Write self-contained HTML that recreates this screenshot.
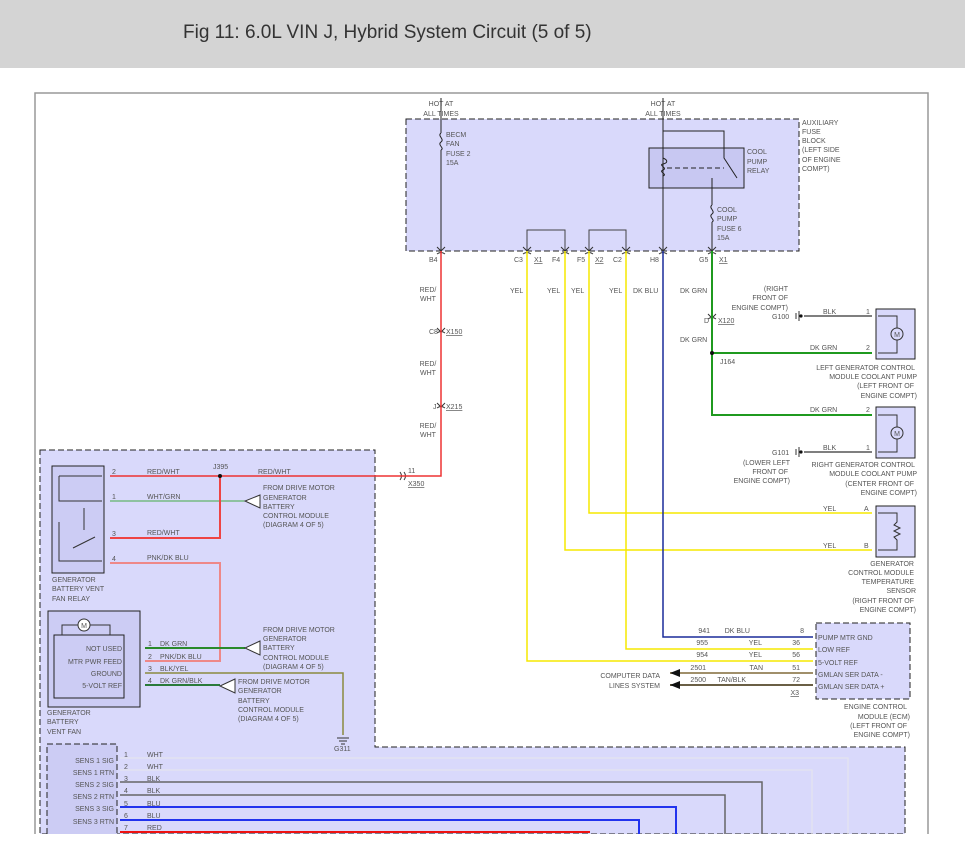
<!DOCTYPE html>
<html><head><meta charset="utf-8"><style>
body{margin:0;background:#fff;width:965px;height:854px;overflow:hidden;font-family:"Liberation Sans",sans-serif}
#hd{position:absolute;left:0;top:0;width:965px;height:68px;background:#d4d4d4}
#hd span{position:absolute;left:183px;top:22px;font-size:19px;color:#333}
svg{position:absolute;left:0;top:0}
text{font-family:"Liberation Sans",sans-serif;font-size:7px;fill:#555}
.r{text-anchor:end}.m{text-anchor:middle}
</style></head><body>
<div id="hd"><span>Fig 11: 6.0L VIN J, Hybrid System Circuit (5 of 5)</span></div>
<svg width="965" height="854" viewBox="0 0 965 854">
<rect x="35" y="93" width="893" height="760" fill="#fff" stroke="#999" stroke-width="1.5"/>
<rect x="0" y="834" width="965" height="20" fill="#fff"/>
<rect x="406" y="119" width="393" height="132" fill="#d9d9fb" stroke="#222" stroke-dasharray="6,3"/>
<path d="M40 450H375V747H905V834H40Z" fill="#d9d9fb" stroke="#222" stroke-dasharray="6,3"/>
<rect x="0" y="834" width="965" height="20" fill="#fff"/>
<rect x="816" y="623" width="94" height="76" fill="#d9d9fb" stroke="#222" stroke-dasharray="6,3"/>
<rect x="876" y="309" width="39" height="50" fill="#d9d9fb" stroke="#222"/>
<rect x="876" y="407" width="39" height="51" fill="#d9d9fb" stroke="#222"/>
<rect x="876" y="506" width="39" height="51" fill="#d9d9fb" stroke="#222"/>
<text class="m" x="441" y="106">HOT AT</text><text class="m" x="441" y="116">ALL TIMES</text>
<text class="m" x="663" y="106">HOT AT</text><text class="m" x="663" y="116">ALL TIMES</text>
<path d="M441 98V133M441 150V251" stroke="#222" fill="none"/>
<path d="M441 133c-4 3 4 6 0 9s4 6 0 8" stroke="#222" fill="none"/>
<text x="446" y="137">BECM</text><text x="446" y="146">FAN</text><text x="446" y="156">FUSE 2</text><text x="446" y="165">15A</text>
<text x="802" y="125">AUXILIARY</text><text x="802" y="134">FUSE</text><text x="802" y="143">BLOCK</text><text x="802" y="152">(LEFT SIDE</text><text x="802" y="162">OF ENGINE</text><text x="802" y="171">COMPT)</text>
<rect x="649" y="148" width="95" height="40" fill="#c8c8f2" stroke="#222"/>
<path d="M663 98V251M663 131H724V158L737 178M712 178V205M712 222V251" stroke="#222" fill="none"/>
<path d="M663 158c5 2 5 5 0 6s5 4 0 6s5 4 0 6" stroke="#222" fill="none"/>
<path d="M667 168H724" stroke="#222" stroke-dasharray="5,3"/>
<path d="M712 205c-4 3 4 6 0 9s4 6 0 8" stroke="#222" fill="none"/>
<text x="747" y="154">COOL</text><text x="747" y="164">PUMP</text><text x="747" y="173">RELAY</text>
<text x="717" y="212">COOL</text><text x="717" y="221">PUMP</text><text x="717" y="231">FUSE 6</text><text x="717" y="240">15A</text>
<path d="M527 251V230H565V251M589 251V230H626V251" stroke="#444" fill="none"/>
<g fill="none" stroke="#333"><path d="M437 247l4 4 4-4M523 247l4 4 4-4M561 247l4 4 4-4M585 247l4 4 4-4M622 247l4 4 4-4M659 247l4 4 4-4M708 247l4 4 4-4"/>
<path d="M437 254q4 -3 8 0M523 254q4 -3 8 0M561 254q4 -3 8 0M585 254q4 -3 8 0M622 254q4 -3 8 0M659 254q4 -3 8 0M708 254q4 -3 8 0"/>
<path d="M437 328l4 4 4-4M437 333q4 -3 8 0M437 403l4 4 4-4M437 408q4 -3 8 0M708 314l4 4 4-4M708 319q4 -3 8 0"/>
<path d="M400 472q3 4 0 8M404 472q3 4 0 8"/></g>
<g font-size="7"><text x="429" y="262">B4</text><text x="514" y="262">C3</text><text x="534" y="262" text-decoration="underline">X1</text><text x="552" y="262">F4</text><text x="577" y="262">F5</text><text x="595" y="262" text-decoration="underline">X2</text><text x="613" y="262">C2</text><text x="650" y="262">H8</text><text x="699" y="262">G5</text><text x="719" y="262" text-decoration="underline">X1</text></g>
<path d="M441 251V476H380" stroke="#e33" stroke-width="1.5" fill="none"/>
<text class="m" x="428" y="292">RED/</text><text class="m" x="428" y="301">WHT</text>
<text class="m" x="428" y="366">RED/</text><text class="m" x="428" y="375">WHT</text>
<text class="m" x="428" y="428">RED/</text><text class="m" x="428" y="437">WHT</text>
<text x="429" y="334">C8</text><text x="446" y="334" text-decoration="underline">X150</text>
<text x="433" y="409">J</text><text x="446" y="409" text-decoration="underline">X215</text>
<path d="M527 251V661H813M565 251V550H872M589 251V513H872M626 251V649H813" stroke="#f5e800" stroke-width="1.5" fill="none"/>
<path d="M663 251V637H813" stroke="#1a2c9a" stroke-width="1.5" fill="none"/>
<path d="M712 251V415H872M712 353H872" stroke="#1f9a1f" stroke-width="2" fill="none"/>
<circle cx="712" cy="353" r="2" fill="#111"/>
<text x="510" y="293">YEL</text><text x="547" y="293">YEL</text><text x="571" y="293">YEL</text><text x="609" y="293">YEL</text><text x="633" y="293">DK BLU</text><text x="680" y="293">DK GRN</text>
<text class="r" x="788" y="291">(RIGHT</text><text class="r" x="788" y="300">FRONT OF</text><text class="r" x="788" y="310">ENGINE COMPT)</text>
<text x="704" y="323">D</text><text x="718" y="323" text-decoration="underline">X120</text>
<text x="680" y="342">DK GRN</text><text x="720" y="364">J164</text>
<path d="M804 316H872M804 452H872" stroke="#555" stroke-width="1.5"/>
<path d="M796 313v6M799 311v10" stroke="#333"/><circle cx="801" cy="316" r="1.6" fill="#111"/>
<path d="M796 449v6M799 447v10" stroke="#333"/><circle cx="801" cy="452" r="1.6" fill="#111"/>
<text x="772" y="319">G100</text><text x="772" y="455">G101</text>
<text x="823" y="314">BLK</text><text x="823" y="450">BLK</text>
<text x="810" y="350">DK GRN</text><text x="810" y="412">DK GRN</text>
<text x="866" y="314">1</text><text x="866" y="350">2</text><text x="866" y="412">2</text><text x="866" y="450">1</text>
<circle cx="897" cy="334" r="6" fill="none" stroke="#333"/><text class="m" x="897" y="337">M</text>
<path d="M878 316H897V328M878 353H897V340" stroke="#333" fill="none"/>
<circle cx="897" cy="433" r="6" fill="none" stroke="#333"/><text class="m" x="897" y="436">M</text>
<path d="M878 415H897V427M878 452H897V439" stroke="#333" fill="none"/>
<text class="r" x="915" y="370">LEFT GENERATOR CONTROL</text><text class="r" x="917" y="379">MODULE COOLANT PUMP</text><text class="r" x="914" y="388">(LEFT FRONT OF</text><text class="r" x="917" y="398">ENGINE COMPT)</text>
<text class="r" x="790" y="465">(LOWER LEFT</text><text class="r" x="788" y="474">FRONT OF</text><text class="r" x="790" y="483">ENGINE COMPT)</text>
<text class="r" x="915" y="467">RIGHT GENERATOR CONTROL</text><text class="r" x="917" y="476">MODULE COOLANT PUMP</text><text class="r" x="914" y="486">(CENTER FRONT OF</text><text class="r" x="917" y="495">ENGINE COMPT)</text>
<text x="823" y="511">YEL</text><text x="823" y="548">YEL</text><text x="864" y="511">A</text><text x="864" y="548">B</text>
<path d="M878 513H897V522l-3 3 6 3-6 3 6 3-6 3 3 3V550H878" stroke="#333" fill="none"/>
<text class="r" x="914" y="566">GENERATOR</text><text class="r" x="914" y="575">CONTROL MODULE</text><text class="r" x="914" y="584">TEMPERATURE</text><text class="r" x="916" y="593">SENSOR</text><text class="r" x="914" y="603">(RIGHT FRONT OF</text><text class="r" x="916" y="612">ENGINE COMPT)</text>
<path d="M670 673H813" stroke="#a08f6a" stroke-width="2"/><path d="M670 685H813" stroke="#6a5f45" stroke-width="2"/>
<path d="M670 673l10-4v8zM670 685l10-4v8z" fill="#111"/>
<text class="r" x="660" y="678">COMPUTER DATA</text><text class="r" x="660" y="688">LINES SYSTEM</text>
<g class="r"><text x="710" y="633">941</text><text x="708" y="645">955</text><text x="708" y="657">954</text><text x="706" y="670">2501</text><text x="706" y="682">2500</text>
<text x="750" y="633">DK BLU</text><text x="762" y="645">YEL</text><text x="762" y="657">YEL</text><text x="763" y="670">TAN</text><text x="746" y="682">TAN/BLK</text>
<text x="804" y="633">8</text><text x="800" y="645">36</text><text x="800" y="657">56</text><text x="800" y="670">51</text><text x="800" y="682">72</text><text x="799" y="695" text-decoration="underline">X3</text></g>
<text x="818" y="640">PUMP MTR GND</text><text x="818" y="652">LOW REF</text><text x="818" y="665">5-VOLT REF</text><text x="818" y="677">GMLAN SER DATA -</text><text x="818" y="689">GMLAN SER DATA +</text>
<text class="r" x="907" y="709">ENGINE CONTROL</text><text class="r" x="910" y="719">MODULE (ECM)</text><text class="r" x="907" y="728">(LEFT FRONT OF</text><text class="r" x="910" y="737">ENGINE COMPT)</text>
<rect x="52" y="466" width="52" height="107" fill="#ccccf4" stroke="#222"/>
<path d="M110 476H380" stroke="#e33" stroke-width="1.5"/>
<path d="M110 501H245" stroke="#4a4" stroke-width="1"/>
<path d="M110 538H220V476" stroke="#e44" stroke-width="2" fill="none"/>
<path d="M110 563H220V661H145" stroke="#e88" stroke-width="2" fill="none"/>
<circle cx="220" cy="476" r="2" fill="#111"/>
<path d="M59 476H102M59 476V501H102M59 522V561H102M73 548L95 537M84 508V530" stroke="#333" fill="none"/>
<text x="112" y="474">2</text><text x="112" y="499">1</text><text x="112" y="536">3</text><text x="112" y="561">4</text>
<text x="147" y="474">RED/WHT</text><text x="258" y="474">RED/WHT</text><text x="213" y="469">J395</text>
<text x="147" y="499">WHT/GRN</text><text x="147" y="535">RED/WHT</text><text x="147" y="560">PNK/DK BLU</text>
<text x="408" y="473">11</text><text x="408" y="486" text-decoration="underline">X350</text>
<path d="M260 495L245 501L260 508Z" fill="#fff" stroke="#333"/>
<text x="263" y="490">FROM DRIVE MOTOR</text><text x="263" y="500">GENERATOR</text><text x="263" y="509">BATTERY</text><text x="263" y="518">CONTROL MODULE</text><text x="263" y="527">(DIAGRAM 4 OF 5)</text>
<text x="52" y="582">GENERATOR</text><text x="52" y="591">BATTERY VENT</text><text x="52" y="601">FAN RELAY</text>
<rect x="48" y="611" width="92" height="96" fill="#ccccf4" stroke="#222"/>
<rect x="54" y="635" width="70" height="63" fill="#ccccf4" stroke="#222"/>
<path d="M62 635V625H110V635" stroke="#333" fill="none"/><circle cx="84" cy="625" r="6" fill="#fff" stroke="#333"/><text class="m" x="84" y="628">M</text>
<text class="r" x="122" y="651">NOT USED</text><text class="r" x="122" y="664">MTR PWR FEED</text><text class="r" x="122" y="676">GROUND</text><text class="r" x="122" y="688">5-VOLT REF</text>
<path d="M145 648H245" stroke="#2a8a2a" stroke-width="2"/>
<path d="M145 673H343V735" stroke="#8a8a40" stroke-width="1.5" fill="none"/>
<path d="M145 685H220" stroke="#2a7a3a" stroke-width="2"/>
<path d="M260 641L245 648L260 655Z" fill="#fff" stroke="#333"/><path d="M235 679L220 686L235 693Z" fill="#fff" stroke="#333"/>
<text x="148" y="646">1</text><text x="160" y="646">DK GRN</text><text x="148" y="659">2</text><text x="160" y="659">PNK/DK BLU</text><text x="148" y="671">3</text><text x="160" y="671">BLK/YEL</text><text x="148" y="683">4</text><text x="160" y="683">DK GRN/BLK</text>
<text x="263" y="632">FROM DRIVE MOTOR</text><text x="263" y="641">GENERATOR</text><text x="263" y="650">BATTERY</text><text x="263" y="660">CONTROL MODULE</text><text x="263" y="669">(DIAGRAM 4 OF 5)</text>
<text x="238" y="684">FROM DRIVE MOTOR</text><text x="238" y="693">GENERATOR</text><text x="238" y="703">BATTERY</text><text x="238" y="712">CONTROL MODULE</text><text x="238" y="721">(DIAGRAM 4 OF 5)</text>
<text x="47" y="715">GENERATOR</text><text x="47" y="724">BATTERY</text><text x="47" y="734">VENT FAN</text>
<path d="M337 738H349M339 741H347M341 744H345" stroke="#333"/><text x="334" y="751">G311</text>
<path d="M47 834V744H117V834" fill="#ccccf4" stroke="#222" stroke-dasharray="6,3"/>
<path d="M120 758H848V834M120 770H812V834" stroke="#e4e4ee" stroke-width="1.2" fill="none"/>
<path d="M120 782H762V834M120 795H725V834" stroke="#666" stroke-width="1.5" fill="none"/>
<path d="M120 807H676V834M120 820H639V834" stroke="#2233ee" stroke-width="2" fill="none"/>
<path d="M120 832H590" stroke="#e11" stroke-width="2"/>
<g class="r"><text x="114" y="763">SENS 1 SIG</text><text x="114" y="775">SENS 1 RTN</text><text x="114" y="787">SENS 2 SIG</text><text x="114" y="799">SENS 2 RTN</text><text x="114" y="811">SENS 3 SIG</text><text x="114" y="824">SENS 3 RTN</text></g>
<text x="124" y="757">1</text><text x="124" y="769">2</text><text x="124" y="781">3</text><text x="124" y="793">4</text><text x="124" y="806">5</text><text x="124" y="818">6</text><text x="124" y="830">7</text>
<text x="147" y="757">WHT</text><text x="147" y="769">WHT</text><text x="147" y="781">BLK</text><text x="147" y="793">BLK</text><text x="147" y="806">BLU</text><text x="147" y="818">BLU</text><text x="147" y="830">RED</text>
<rect x="0" y="834" width="965" height="20" fill="#fff"/>
</svg>
</body></html>
